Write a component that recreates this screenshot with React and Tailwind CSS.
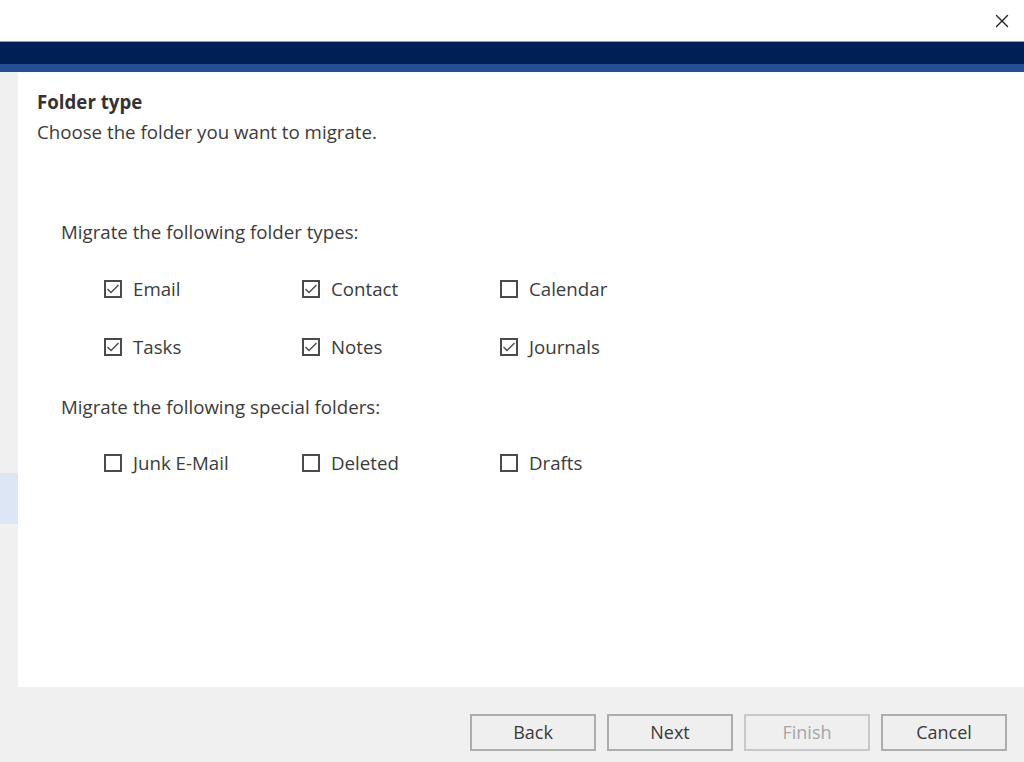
import { X } from 'lucide-react'

const font = { fontFamily: '"Open Sans", "Noto Sans", sans-serif' }

function Check({ label, checked }) {
  return (
    <div className="flex items-center gap-[11px] w-[198px]">
      <span className="w-[18px] h-[18px] border-2 border-[#4a4a4a] bg-white grid place-items-center shrink-0">
        {checked && (
          <svg width="14" height="14" viewBox="0 0 14 14">
            <path d="M1.5 7 L5 10.5 L12.5 3" fill="none" stroke="#4a4a4a" strokeWidth="1.4" />
          </svg>
        )}
      </span>
      <span>{label}</span>
    </div>
  )
}

function Btn({ children, disabled }) {
  return (
    <button
      className={
        'w-[126px] h-[37px] border-2 bg-[#efefef] text-[18px] ' +
        (disabled ? 'text-[#a6a6a6] border-[#c8c8c8]' : 'text-[#3a3a3a] border-[#adadad]')
      }
    >
      {children}
    </button>
  )
}

export default function App() {
  return (
    <div className="w-[1024px] h-[762px] flex flex-col bg-[#f0f0f0] text-[#3b3b3b] overflow-hidden" style={font}>
      <div className="h-[41px] bg-white flex items-center justify-end pr-[11px]">
        <X size={22} strokeWidth={1.5} className="text-[#222]" />
      </div>
      <div className="h-[1px] bg-[#8a9ab8]" />
      <div className="h-[22px] bg-[#001f57]" />
      <div className="h-[8px] bg-[#264f93]" />
      <div className="flex h-[615px]">
        <div className="w-[18px] flex flex-col">
          <div className="h-[401px]" />
          <div className="h-[51px] bg-[#dde6f4]" />
        </div>
        <div className="flex-1 bg-white pl-[19px] pt-[18px] text-[18.7px] leading-[24px]">
          <div className="font-bold text-[#333]">Folder type</div>
          <div className="mt-[6px]">Choose the folder you want to migrate.</div>
          <div className="pl-[24px] mt-[76px]">
            <div>Migrate the following folder types:</div>
            <div className="pl-[43px] mt-[33px] flex">
              <Check label="Email" checked />
              <Check label="Contact" checked />
              <Check label="Calendar" />
            </div>
            <div className="pl-[43px] mt-[34px] flex">
              <Check label="Tasks" checked />
              <Check label="Notes" checked />
              <Check label="Journals" checked />
            </div>
            <div className="mt-[36px]">Migrate the following special folders:</div>
            <div className="pl-[43px] mt-[32px] flex">
              <Check label="Junk E-Mail" />
              <Check label="Deleted" />
              <Check label="Drafts" />
            </div>
          </div>
        </div>
      </div>
      <div className="flex-1 flex justify-end items-start pt-[27px] pr-[17px] gap-[11px]">
        <Btn>Back</Btn>
        <Btn>Next</Btn>
        <Btn disabled>Finish</Btn>
        <Btn>Cancel</Btn>
      </div>
    </div>
  )
}
